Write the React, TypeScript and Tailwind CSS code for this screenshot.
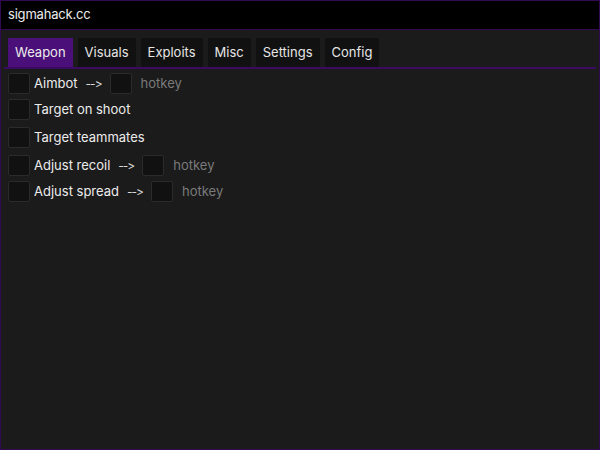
import { useState } from 'react'

const tabs = ['Weapon', 'Visuals', 'Exploits', 'Misc', 'Settings', 'Config']

const options = [
  { label: 'Aimbot', hotkey: true },
  { label: 'Target on shoot', hotkey: false },
  { label: 'Target teammates', hotkey: false },
  { label: 'Adjust recoil', hotkey: true },
  { label: 'Adjust spread', hotkey: true },
]

export default function App() {
  const [active, setActive] = useState('Weapon')

  return (
    <div
      className="w-[600px] h-[450px] flex flex-col border border-[#330a52] bg-[#1b1b1b] text-[#ececec] overflow-hidden [font-feature-settings:'calt'_0,'liga'_0]"
      style={{ fontFamily: 'Inter, "Noto Sans", sans-serif' }}
    >
      {/* Title bar */}
      <div className="h-[29px] flex items-center px-[7px] bg-black border-b border-[#330a52] text-[13px] tracking-[-0.2px]">
        sigmahack.cc
      </div>

      {/* Tabs */}
      <div className="mt-[8px] mx-[3px] flex gap-[5px] pl-[4px] border-b-2 border-[#3a0b60]">
        {tabs.map((tab) => (
          <button
            key={tab}
            onClick={() => setActive(tab)}
            className={`h-[29px] px-[7px] text-[13px] ${
              active === tab ? 'bg-[#4a0f78] text-[#ececec]' : 'bg-[#111111] text-[#e6e6e6]'
            }`}
          >
            {tab}
          </button>
        ))}
      </div>

      {/* Options */}
      <div className="flex flex-col px-[7px] pt-[4px]">
        {options.map((opt, i) => (
          <div
            key={opt.label}
            className={`flex items-center h-[21px] ${
              i === 0 ? 'mt-0' : i === 1 || i === 4 ? 'mt-[5px]' : 'mt-[7px]'
            }`}
          >
            <div className="w-[22px] h-[21px] rounded-[2px] bg-[#111111] border border-[#2b2b2b]" />
            <span className="ml-[4px] text-[13px]">{opt.label}</span>
            {opt.hotkey && (
              <>
                <span className="ml-[8px] text-[12px] tracking-[-1px] text-[#d8d8d8]">--&gt;</span>
                <div className="ml-[8px] w-[22px] h-[21px] rounded-[2px] bg-[#111111] border border-[#2b2b2b]" />
                <span className="ml-[9px] text-[13px] text-[#7a7a7a]">hotkey</span>
              </>
            )}
          </div>
        ))}
      </div>
    </div>
  )
}
